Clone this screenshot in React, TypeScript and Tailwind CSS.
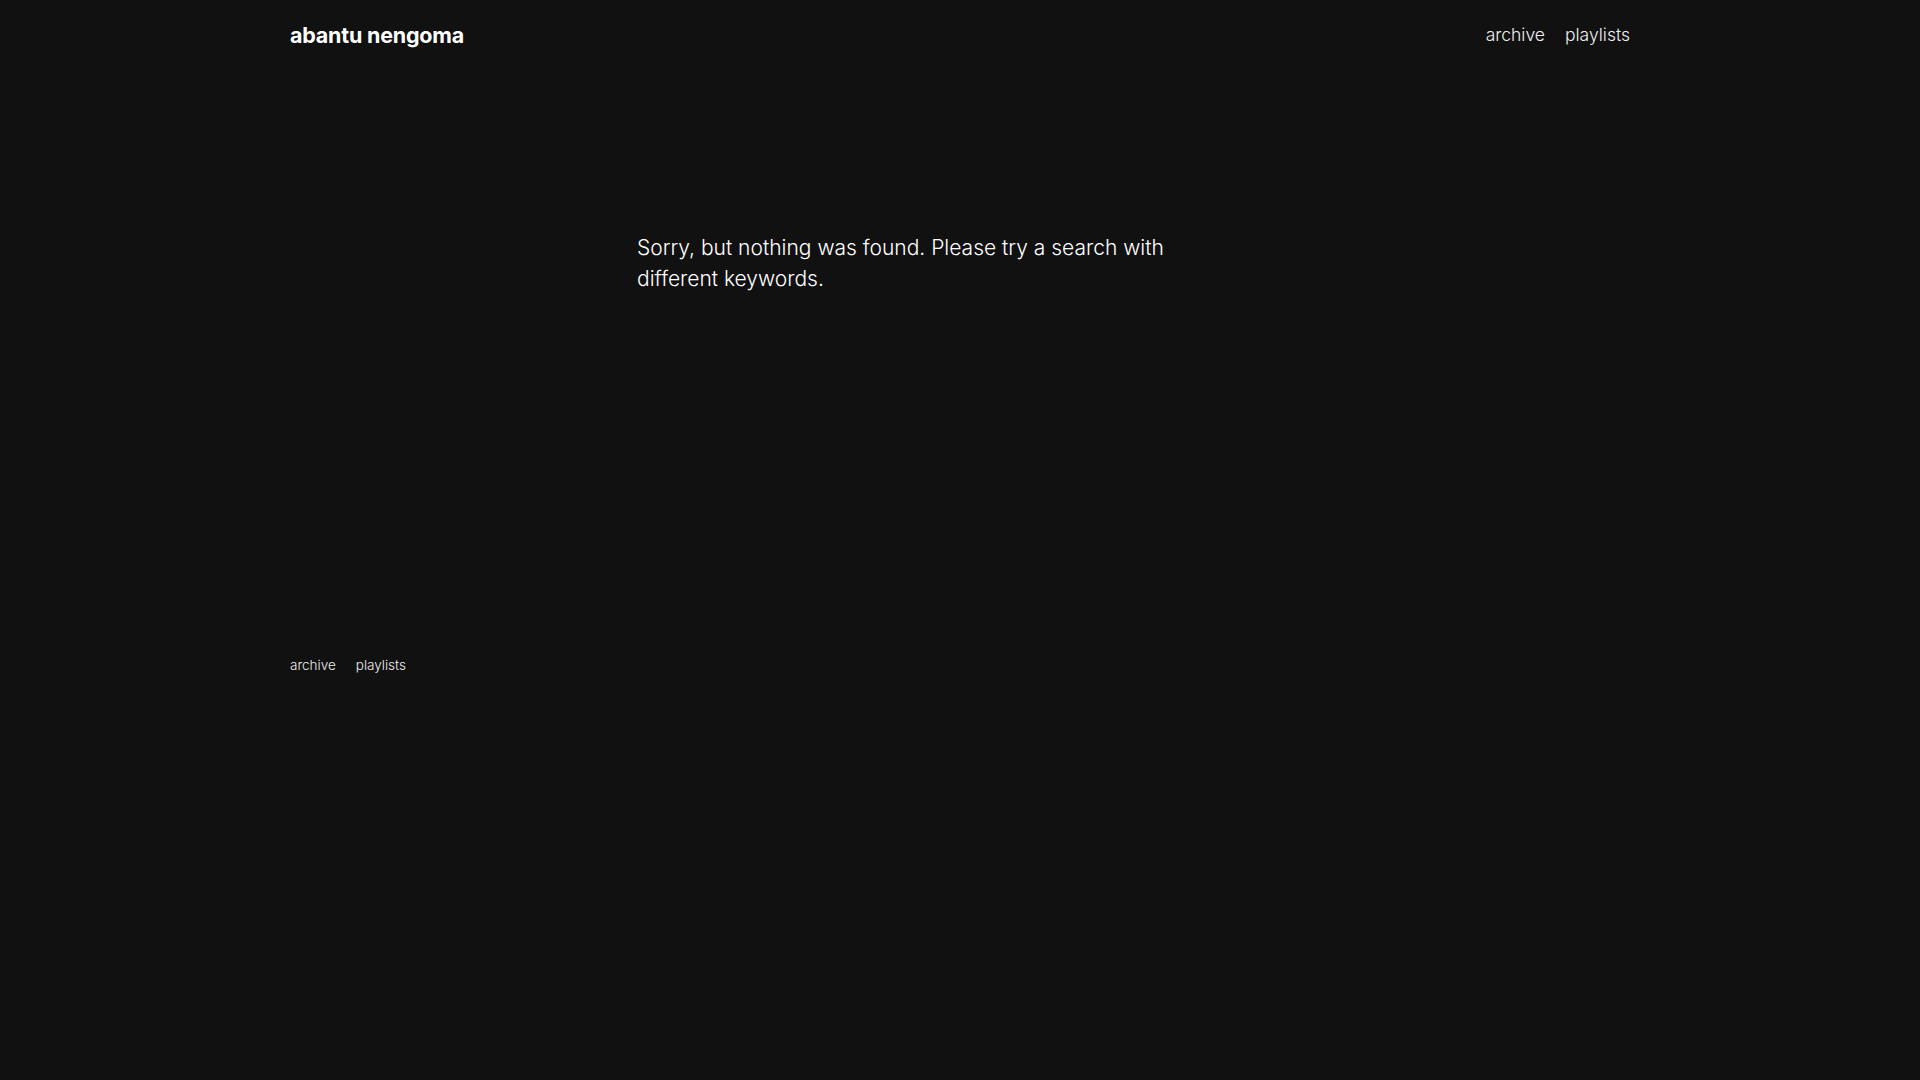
import React from "react";

export default function App() {
  return (
    <div className="min-h-[1080px] w-full bg-[#111111] text-white" style={{ fontFamily: "Inter, 'Noto Sans', sans-serif" }}>
      <div className="mx-auto w-[1340px]">
        <header className="flex h-[70px] items-center justify-between">
          <a className="text-[21.5px] font-bold tracking-[-0.01em] text-white">abantu nengoma</a>
          <nav className="flex items-center gap-[20px] text-[17.5px] font-light text-[#f0f0f0]">
            <a>archive</a>
            <a>playlists</a>
          </nav>
        </header>
        <main className="min-h-[585px] pt-[162px]">
          <div className="ml-[347px] w-[540px]">
            <p className="text-[21px] font-light leading-[31px] text-white">
              Sorry, but nothing was found. Please try a search with different keywords.
            </p>
          </div>
        </main>
        <footer className="flex items-center gap-[20px] pb-[20px] text-[13.5px] font-light text-[#eeeeee]">
          <a>archive</a>
          <a>playlists</a>
        </footer>
      </div>
    </div>
  );
}
